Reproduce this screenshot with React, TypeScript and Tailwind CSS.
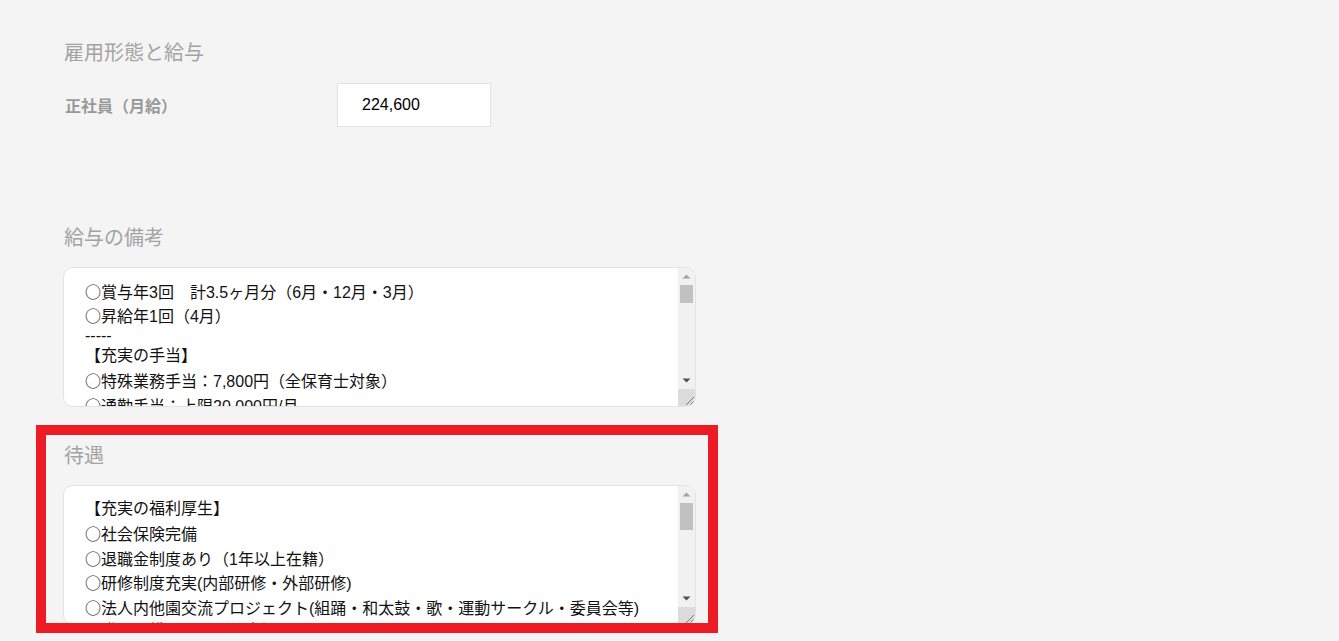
import React from "react";

const CJK = "font-['Noto_Sans_CJK_JP',sans-serif]";

function Line({ text }: { text: string }) {
  if (text === "-----") {
    return <div className="h-[16px] leading-[16px] whitespace-nowrap">{text}</div>;
  }
  const circle = text.startsWith("○");
  return (
    <div className="h-[24.4px] leading-[24.4px] whitespace-nowrap">
      {circle ? (
        <>
          <span className={CJK}>○</span>
          {text.slice(1)}
        </>
      ) : (
        text
      )}
    </div>
  );
}

function Scrollbar({ thumb, track }: { thumb: number; track: number }) {
  return (
    <div className="w-[17px] shrink-0 bg-[#f1f1f1] flex flex-col">
      <div className="h-[17px] flex items-center justify-center">
        <svg width="9" height="5" viewBox="0 0 9 5">
          <path d="M0.5 4.5 L4.5 0.5 L8.5 4.5 Z" fill="#a3a3a3" />
        </svg>
      </div>
      <div className="flex flex-col items-center" style={{ height: track }}>
        <div className="w-[13px] bg-[#c1c1c1]" style={{ height: thumb }} />
      </div>
      <div className="h-[17px] flex items-center justify-center">
        <svg width="9" height="5" viewBox="0 0 9 5">
          <path d="M0.5 0.5 L8.5 0.5 L4.5 4.5 Z" fill="#505050" />
        </svg>
      </div>
      <div className="h-[17px] bg-[#dcdcdc] flex items-end justify-end">
        <svg width="12" height="12" viewBox="0 0 12 12">
          <path d="M11 3 L3 11 M11 7 L7 11" stroke="#7a7a7a" strokeWidth="1" />
        </svg>
      </div>
    </div>
  );
}

function TextBox({ lines, thumb }: { lines: string[]; thumb: number }) {
  return (
    <div className="w-[633px] h-[140px] bg-white border border-[#e3e3e3] rounded-[10px] overflow-hidden flex">
      <div className="flex-1 overflow-hidden pl-[21px] pt-[11px] text-[16px] text-[#111] font-['Liberation_Sans','Noto_Sans_CJK_JP',sans-serif]">
        {lines.map((l, i) => (
          <Line key={i} text={l} />
        ))}
      </div>
      <Scrollbar thumb={thumb} track={87} />
    </div>
  );
}

export default function App() {
  const salary = [
    "○賞与年3回　計3.5ヶ月分（6月・12月・3月）",
    "○昇給年1回（4月）",
    "-----",
    "【充実の手当】",
    "○特殊業務手当：7,800円（全保育士対象）",
    "○通勤手当：上限20,000円/月",
    "○住宅手当：10,000円/月",
  ];
  const benefits = [
    "【充実の福利厚生】",
    "○社会保険完備",
    "○退職金制度あり（1年以上在籍）",
    "○研修制度充実(内部研修・外部研修)",
    "○法人内他園交流プロジェクト(組踊・和太鼓・歌・運動サークル・委員会等)",
    "【職員の働きやすさを大切に】",
    "○有給休暇取得推進",
  ];
  return (
    <div className="relative w-full min-h-[641px] h-[641px] overflow-hidden bg-[#f4f4f4] pl-[63px] pt-[42px] font-['Noto_Sans_CJK_JP',sans-serif]">
      <h2 className="h-[20px] leading-[20px] text-[20px] text-[#a3a3a3] pl-[1px] font-normal">雇用形態と給与</h2>
      <div className="mt-[21px] flex items-center h-[44px]">
        <div className="w-[274px] pl-[2px] text-[16px] font-bold text-[#999999]">正社員（月給）</div>
        <div className="w-[154px] h-[44px] bg-white border border-[#e2e2e2] flex items-center pl-[24px] text-[16px] text-black font-['Liberation_Sans',sans-serif]">
          224,600
        </div>
      </div>
      <h2 className="mt-[100px] h-[20px] leading-[20px] text-[20px] text-[#a3a3a3] pl-[1px] font-normal">給与の備考</h2>
      <div className="mt-[20px]">
        <TextBox lines={salary} thumb={18} />
      </div>
      <h2 className="mt-[38px] h-[20px] leading-[20px] text-[20px] text-[#a3a3a3] pl-[1px] font-normal">待遇</h2>
      <div className="mt-[20px]">
        <TextBox lines={benefits} thumb={27} />
      </div>
      <div className="absolute left-[36px] top-[425px] w-[682px] h-[208px] border-[10px] border-[#ed1c24]" />
    </div>
  );
}
